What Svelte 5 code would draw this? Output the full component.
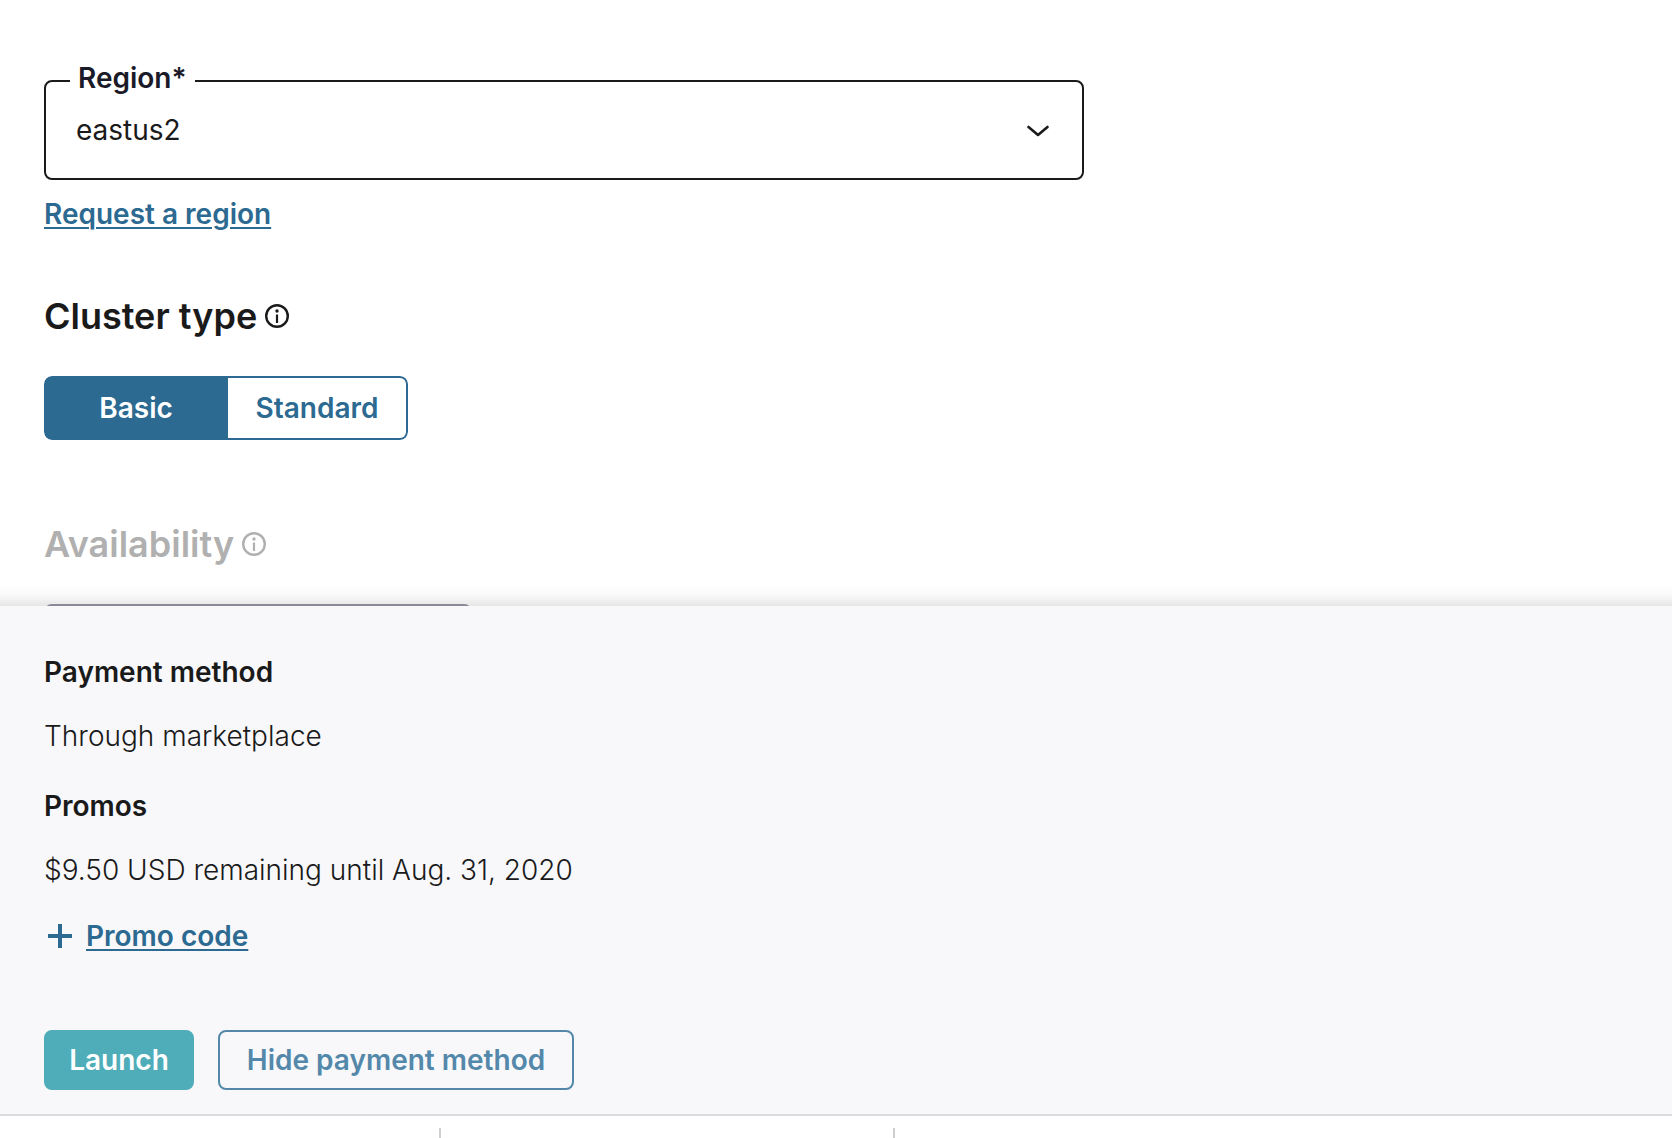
<script>
  const regions = ['eastus2', 'eastus', 'westus2', 'centralus'];
  const clusterTypes = ['Basic', 'Standard'];

  let region = $state('eastus2');
  let clusterType = $state('Basic');
  let showPayment = $state(true);
</script>

{#snippet infoIcon()}
  <svg class="info" viewBox="0 0 24 24" aria-hidden="true">
    <circle cx="12" cy="12" r="10.8" fill="none" stroke="currentColor" stroke-width="2.4" />
    <circle cx="12" cy="7" r="1.7" fill="currentColor" />
    <path d="M12 10.5V19" fill="none" stroke="currentColor" stroke-width="2.2" />
  </svg>
{/snippet}

<div class="page">
  <main class="form">
    <div class="field">
      <label for="region">Region*</label>
      <select id="region" bind:value={region}>
        {#each regions as name}
          <option value={name}>{name}</option>
        {/each}
      </select>
      <svg class="chevron" viewBox="0 0 24 24" aria-hidden="true">
        <path d="M2.5 8L12 16L21.5 8" fill="none" stroke="currentColor" stroke-width="2.6" stroke-linecap="round" stroke-linejoin="round" />
      </svg>
    </div>
    <a class="link request" href="#request-region">Request a region</a>

    <h2>Cluster type {@render infoIcon()}</h2>
    <div class="toggle" role="group" aria-label="Cluster type">
      {#each clusterTypes as type}
        <button
          type="button"
          class:selected={clusterType === type}
          aria-pressed={clusterType === type}
          onclick={() => (clusterType = type)}>{type}</button>
      {/each}
    </div>

    <h2 class="muted">Availability {@render infoIcon()}</h2>
    <div class="availability"></div>
  </main>

  <section class="panel">
    {#if showPayment}
      <h3>Payment method</h3>
      <p>Through marketplace</p>
      <h3>Promos</h3>
      <p>$9.50 USD remaining until Aug. 31, 2020</p>
      <div class="promo">
        <svg class="plus" viewBox="0 0 24 24" aria-hidden="true">
          <path d="M12 0V24M0 12H24" fill="none" stroke="currentColor" stroke-width="4" />
        </svg>
        <a class="link" href="#promo-code">Promo code</a>
      </div>
    {/if}
    <div class="actions">
      <button type="button" class="launch">Launch</button>
      <button type="button" class="hide" onclick={() => (showPayment = !showPayment)}>
        {showPayment ? 'Hide' : 'Show'} payment method
      </button>
    </div>
  </section>

  <footer class="columns">
    <div></div>
    <div></div>
    <div></div>
  </footer>
</div>

<style>
  :global(body) {
    margin: 0;
    background: #fff;
  }

  .page {
    display: flex;
    flex-direction: column;
    min-height: 100vh;
    overflow: hidden;
    color: #1a1a1a;
    font-family: Inter, "Liberation Sans", sans-serif;
    font-size: 28px;
    line-height: 32px;
  }

  .page * {
    box-sizing: border-box;
  }

  button,
  select {
    margin: 0;
    font: inherit;
    cursor: pointer;
  }

  h2,
  h3,
  p {
    margin: 0;
  }

  .form {
    display: flex;
    flex-direction: column;
    align-items: flex-start;
    padding: 80px 44px 0;
  }

  .field {
    position: relative;
    width: 100%;
    max-width: 1040px;
  }

  .field label {
    position: absolute;
    top: -18px;
    left: 26px;
    padding: 0 8px;
    background: #fff;
    color: #1a1a28;
    font-weight: 600;
  }

  .field select {
    display: block;
    width: 100%;
    height: 100px;
    padding: 0 72px 0 30px;
    border: 2px solid #1a1a1a;
    border-radius: 8px;
    background: #fff;
    color: #1a1a1a;
    appearance: none;
  }

  .chevron {
    position: absolute;
    top: 39px;
    right: 34px;
    width: 24px;
    height: 24px;
    pointer-events: none;
  }

  .link {
    color: #2c6a91;
    font-weight: 600;
    text-decoration: underline;
    text-decoration-thickness: 2px;
    text-underline-offset: 3px;
  }

  .request {
    margin-top: 18px;
  }

  h2 {
    display: flex;
    align-items: center;
    gap: 8px;
    margin-top: 64px;
    font-size: 36px;
    font-weight: 600;
    line-height: 44px;
  }

  .info {
    width: 24px;
    height: 24px;
  }

  .toggle {
    display: grid;
    grid-template-columns: 184px 180px;
    height: 64px;
    margin-top: 38px;
    overflow: hidden;
    border-radius: 8px;
  }

  .toggle button {
    padding: 0;
    border: 2px solid #2c6a91;
    background: #fff;
    color: #2c6a91;
    font-weight: 600;
  }

  .toggle button:first-child {
    border-radius: 8px 0 0 8px;
  }

  .toggle button:last-child {
    border-left: 0;
    border-radius: 0 8px 8px 0;
  }

  .toggle .selected {
    background: #2c6a91;
    color: #fff;
  }

  h2.muted {
    margin-top: 82px;
    color: #b0b0b0;
  }

  .availability {
    width: 428px;
    height: 64px;
    margin-top: 38px;
    margin-bottom: -62px;
    border: 2px solid #9997a8;
    border-radius: 8px;
  }

  .panel {
    position: relative;
    padding: 50px 44px 24px;
    border-bottom: 2px solid #dadbdd;
    background: #f8f8fb;
    box-shadow: 0 20px 20px 20px rgba(0, 0, 0, 0.2);
  }

  h3 {
    font-size: 28px;
    font-weight: 600;
    line-height: 32px;
  }

  p {
    margin: 32px 0 38px;
    font-weight: 300;
  }

  .promo {
    display: flex;
    align-items: center;
    gap: 14px;
    margin-top: -4px;
    padding-left: 4px;
    color: #2c6a91;
  }

  .plus {
    width: 24px;
    height: 24px;
  }

  .actions {
    display: flex;
    gap: 24px;
    margin-top: 78px;
  }

  .actions button {
    min-width: 150px;
    height: 60px;
    padding: 0 22px;
    border: 2px solid #5488aa;
    border-radius: 8px;
    background: transparent;
    color: #5488aa;
    font-weight: 600;
  }

  .actions .hide {
    min-width: 356px;
  }

  .actions .launch {
    border-color: #4fadb9;
    background: #4fadb9;
    color: #fff;
  }

  .columns {
    position: relative;
    display: grid;
    flex: 1;
    grid-template-columns: 441px 454px 1fr;
    padding-top: 12px;
    background: #fff;
  }

  .columns div {
    min-height: 10px;
    border-right: 2px solid #cfcfcf;
  }

  .columns div:last-child {
    border-right: 0;
  }
</style>
